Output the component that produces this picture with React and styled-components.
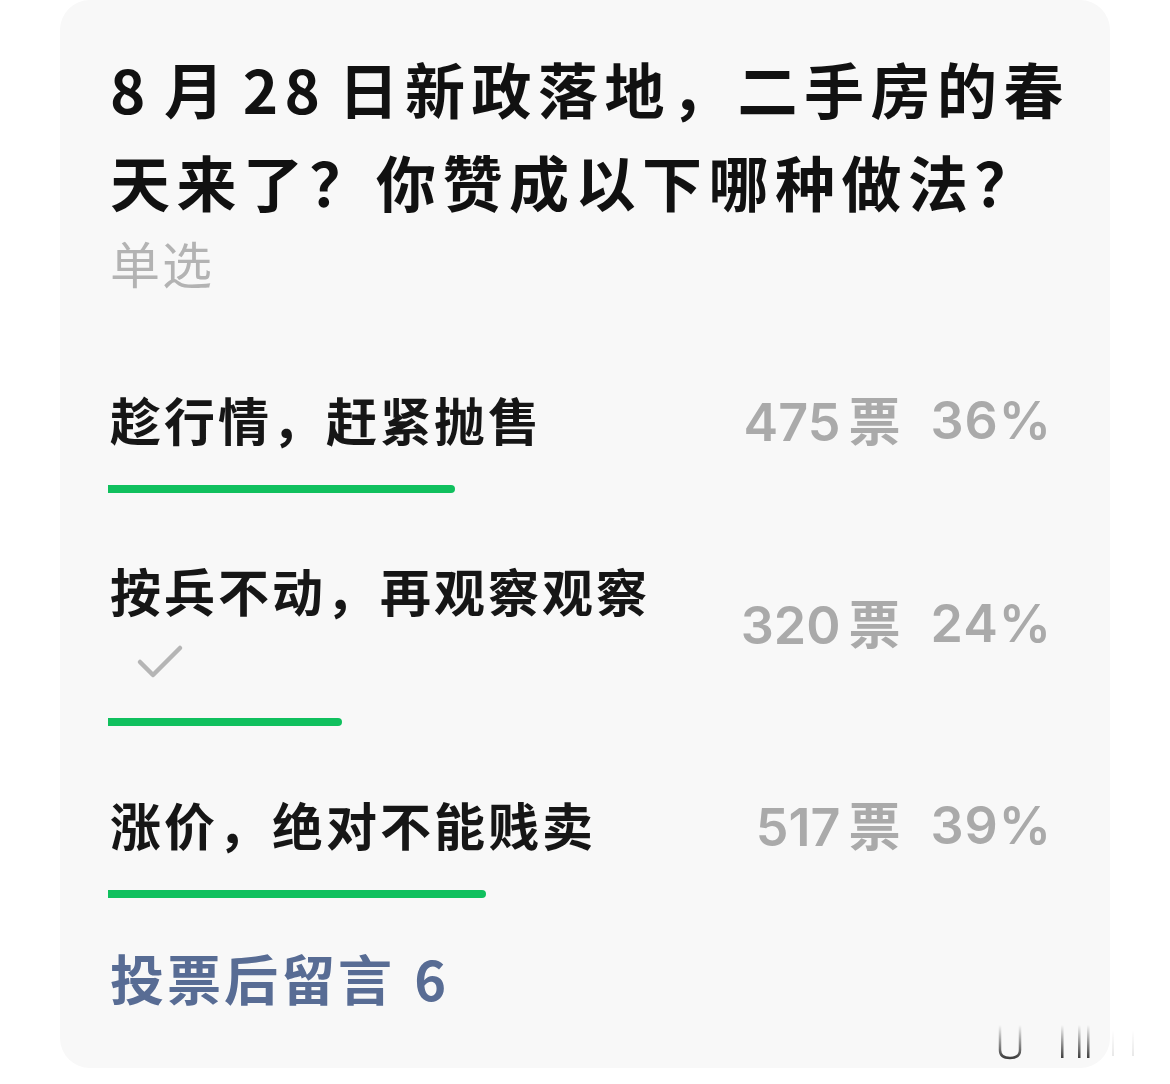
import React from "react";
import styled, { createGlobalStyle } from "styled-components";

const GlobalStyle = createGlobalStyle`
  html, body {
    margin: 0;
    padding: 0;
    background: #ffffff;
  }
  body {
    font-family: "Noto Sans CJK SC", "Noto Sans", sans-serif;
  }
`;

const Page = styled.div`
  position: relative;
  width: 1170px;
  height: 1084px;
  overflow: hidden;
  background: #ffffff;
`;

const Card = styled.div`
  margin: 0 60px;
  height: 1068px;
  box-sizing: border-box;
  padding: 41px 62px 0 48px;
  background: #f8f8f8;
  border-radius: 30px;
`;

const Title = styled.h1`
  margin: 0 -40px 0 2px;
  font-size: 60px;
  line-height: 93px;
  font-weight: 700;
  letter-spacing: 6.5px;
  word-spacing: -8px;
  white-space: nowrap;
  color: #111111;
`;

const Mode = styled.div`
  margin: 5px 0 0 2px;
  font-size: 50px;
  line-height: 60px;
  letter-spacing: 2px;
  color: #b3b3b3;
`;

const Options = styled.div`
  margin-top: 90px;
  display: flex;
  flex-direction: column;
  gap: 61px;
`;

const Option = styled.div`
  display: flex;
  flex-direction: column;
`;

const OptionHead = styled.div`
  display: flex;
  align-items: center;
  justify-content: space-between;
`;

const OptionLabel = styled.div`
  display: flex;
  flex-direction: column;
`;

const OptionText = styled.div`
  margin-left: 2px;
  font-size: 51px;
  line-height: 72px;
  font-weight: 700;
  letter-spacing: 3px;
  color: #161616;
`;

const Check = styled.div`
  height: 63px;
  padding-left: 28px;
  display: flex;
  align-items: flex-start;
  padding-top: 18px;
  box-sizing: border-box;
`;

const Stats = styled.div`
  display: flex;
  align-items: center;
  margin-right: -4px;
  padding-top: 4px;
  line-height: 66px;
  font-family: "Inter", "Noto Sans CJK SC", sans-serif;
  font-size: 52px;
  font-weight: 600;
  color: #aaaaaa;
`;

const Unit = styled.span`
  margin-left: 8px;
  font-family: "Noto Sans CJK SC", sans-serif;
  font-weight: 700;
`;

const Votes = styled.span`
  min-width: 160px;
  text-align: right;
`;

const Percent = styled.span`
  margin-left: 30px;
  min-width: 118px;
  text-align: right;
  letter-spacing: 1px;
`;

const Track = styled.div`
  margin-top: 29px;
  width: 958px;
  height: 8px;
`;

const Bar = styled.div`
  height: 100%;
  background: #10c05e;
  border-radius: 0 4px 4px 0;
`;

const Comment = styled.div`
  margin: 44px 0 0 2px;
  font-size: 54px;
  line-height: 72px;
  font-weight: 700;
  letter-spacing: 3px;
  word-spacing: 4px;
  color: #586c94;
`;

const Watermark = styled.svg`
  position: absolute;
  left: 990px;
  top: 1020px;
`;

const CheckIcon = () => (
  <svg width="48" height="38" viewBox="0 0 48 38">
    <path
      d="M4 18 L17 31 L44 4"
      fill="none"
      stroke="#b5b5b5"
      strokeWidth="4.5"
      strokeLinecap="round"
      strokeLinejoin="round"
    />
  </svg>
);

const options = [
  { text: "趁行情，赶紧抛售", votes: 475 },
  { text: "按兵不动，再观察观察", votes: 320, checked: true },
  { text: "涨价，绝对不能贱卖", votes: 517 },
];

const total = options.reduce((s, o) => s + o.votes, 0);

export default function App() {
  return (
    <Page>
      <GlobalStyle />
      <Card>
        <Title>
          8 月 28 日新政落地，二手房的春
          <br />
          天来了？你赞成以下哪种做法？
        </Title>
        <Mode>单选</Mode>
        <Options>
          {options.map((o) => {
            const pct = o.votes / total;
            return (
              <Option key={o.text}>
                <OptionHead>
                  <OptionLabel>
                    <OptionText>{o.text}</OptionText>
                    {o.checked && (
                      <Check>
                        <CheckIcon />
                      </Check>
                    )}
                  </OptionLabel>
                  <Stats>
                    <Votes>
                      {o.votes}
                      <Unit>票</Unit>
                    </Votes>
                    <Percent>{Math.round(pct * 100)}%</Percent>
                  </Stats>
                </OptionHead>
                <Track>
                  <Bar style={{ width: `${pct * 100}%` }} />
                </Track>
              </Option>
            );
          })}
        </Options>
        <Comment>投票后留言 6</Comment>
      </Card>
      <Watermark width="160" height="50" viewBox="0 0 160 50">
        <defs>
          <linearGradient id="wm" x1="0" y1="0" x2="0" y2="1">
            <stop offset="0" stopColor="#000" stopOpacity="0" />
            <stop offset="1" stopColor="#000" stopOpacity="0.75" />
          </linearGradient>
        </defs>
        <path d="M10 5 V30 Q10 38 20 38 Q30 38 30 30 V5" fill="none" stroke="url(#wm)" strokeWidth="2.5" />
        <rect x="71" y="5" width="2.5" height="33" fill="url(#wm)" />
        <rect x="88" y="5" width="2.5" height="33" fill="url(#wm)" />
        <rect x="97" y="5" width="2.5" height="33" fill="url(#wm)" />
        <rect x="122" y="10" width="2" height="26" fill="url(#wm)" opacity="0.12" />
        <rect x="142" y="10" width="2" height="26" fill="url(#wm)" opacity="0.12" />
      </Watermark>
    </Page>
  );
}
